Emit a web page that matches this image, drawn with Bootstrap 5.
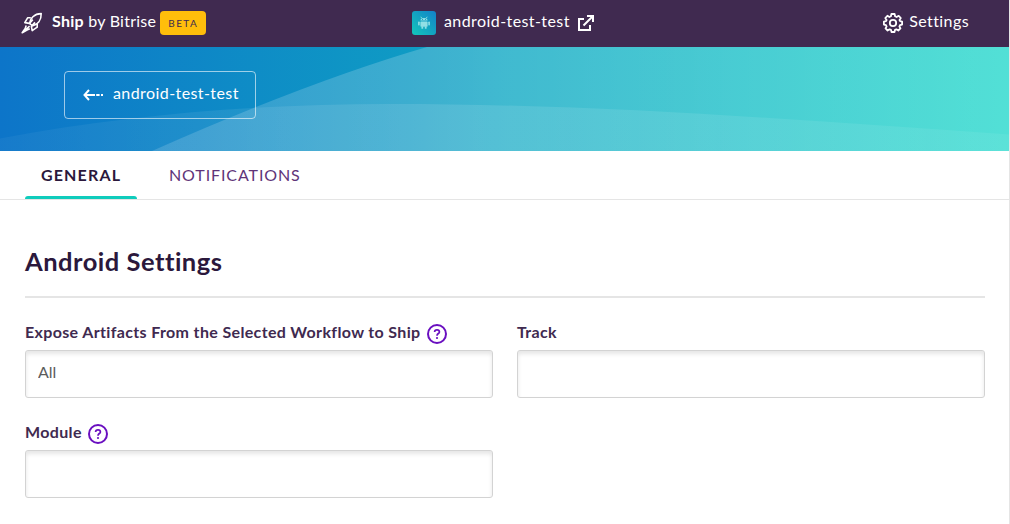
<!DOCTYPE html>
<html lang="en">
<head>
<meta charset="utf-8">
<meta name="viewport" content="width=device-width, initial-scale=1">
<title>Ship by Bitrise</title>
<link href="https://cdn.jsdelivr.net/npm/bootstrap@5.3.0/dist/css/bootstrap.min.css" rel="stylesheet">
<style>
  body { font-family: Lato, "Liberation Sans", sans-serif; font-size: 16px; line-height: 24px; color: #402a50; overflow: hidden; }
  .app-shell { min-height: 524px; border-right: 1px solid #e5e5e5; }
  .top-bar { height: 47px; background: #402a50; padding: 0 40px 5px 21px; display: grid; grid-template-columns: 391px 1fr auto; align-items: center; }
  .top-bar svg, .help-icon, .back-btn svg { flex: none; display: block; }
  .brand-icon { margin-top: 4px; }
  .brand-name { margin-left: 9px; letter-spacing: .25px; }
  .beta-tag { margin-left: 4px; margin-top: 4px; width: 46px; height: 24px; border-radius: 4px; background: #ffbe0b; color: #402a50; font-size: 10px; line-height: 22px; letter-spacing: 1.4px; padding-bottom: 1px; }
  .tile-icon { margin-top: 4px; }
  .open-icon { margin: 4px 0 0 8px; }
  .gear-icon { margin-top: 4px; }
  .app-name { letter-spacing: .42px; }
  .set-name { margin-left: 6px; letter-spacing: .42px; }
  .hero { height: 104px; background: linear-gradient(90deg, #0d75c9 0%, #0f9cc4 42%, #10a8c4 50%, #0fd4c6 100%); padding: 24px 64px; }
  .hero-waves { inset: 0; width: 100%; height: 100%; }
  .back-btn { width: 192px; height: 48px; border: 1px solid rgba(255,255,255,.6); border-radius: 4px; color: #fff; padding: 0 0 4px 17px; }
  .back-btn svg { margin-top: 3px; }
  .back-btn .app-name { margin-left: 9px; }
  .tab-row { height: 49px; padding-left: 25px; border-bottom: 1px solid #e5e5e5; }
  .tab-row .nav-link { height: 48px; padding: 12px 16px; color: #5f3479; letter-spacing: .9px; }
  .tab-row .nav-link.active { height: 45px; color: #2b183c; font-weight: 700; letter-spacing: 1.15px; }
  .tab-active { width: 112px; }
  .tab-bar { height: 3px; background: #0fccbc; border-radius: 3px 3px 0 0; }
  .settings { padding: 42px 24px 0 25px; }
  .settings h1 { font-size: 25.5px; line-height: 38px; font-weight: 700; color: #2b183c; margin: 0; letter-spacing: .5px; }
  .rule { height: 2px; background: #e5e5e5; margin-top: 16px; }
  .field-grid { display: grid; grid-template-columns: 468px 468px; column-gap: 24px; row-gap: 24px; margin-top: 24px; }
  .field-label { height: 24px; margin-bottom: 4px; font-weight: 700; letter-spacing: .35px; }
  .field-label > span { line-height: 20px; }
  .help-icon { margin: 2px 0 0 6px; }
  .field-input { height: 48px; border: 1px solid #d3d3d3; border-radius: 3px; padding: 7px 12px 13px; color: #5c5c5c; box-shadow: inset 0 3px 4px rgba(0,0,0,.1); line-height: 24px; }
</style>
</head>
<body>
<svg width="0" height="0" class="position-absolute">
  <symbol id="help" viewBox="0 0 20 20">
    <circle cx="10" cy="10" r="9" fill="none" stroke="#6a0fc0" stroke-width="2"/>
    <path d="M7.6 8C7.6 6.6 8.6 5.8 10 5.8S12.4 6.6 12.4 7.9C12.4 9.6 10 9.5 10 11.7" fill="none" stroke="#6a0fc0" stroke-width="1.7"/>
    <circle cx="10" cy="14" r="1.1" fill="#6a0fc0"/>
  </symbol>
</svg>
<div class="app-shell">
  <header class="top-bar text-white">
    <div class="d-flex align-items-center">
      <svg class="brand-icon" width="22" height="22" viewBox="0 0 22 22" fill="none" stroke="#fff" stroke-width="1.6" stroke-linejoin="round">
        <path d="M9 11.8C8.6 6.4 13.4 1.7 20.2 1.6C20.4 8.4 16.6 12.6 11.8 13.8Z"/>
        <path d="M9.8 5.8H6.6L3.8 10.6L8.4 11.4L11.8 7.6M16.2 11.8V15.2L11.2 18.6L10.4 14.4L14 10.4"/>
        <path d="M5.2 13.6L4.2 16.4L1.2 20.8L6 18L8.8 16.8M1.2 20.8L8.6 14.2"/>
      </svg>
      <span class="brand-name"><strong>Ship</strong> by Bitrise</span>
      <span class="beta-tag d-flex align-items-center justify-content-center">BETA</span>
    </div>
    <div class="d-flex align-items-center">
      <svg class="tile-icon" width="24" height="24" viewBox="0 0 24 24">
        <defs><linearGradient id="tile" x1="0" y1="1" x2="1" y2="0"><stop stop-color="#13c7bb"/><stop offset="1" stop-color="#1381c8"/></linearGradient></defs>
        <rect width="24" height="24" rx="3" fill="url(#tile)"/>
        <g fill="#91dfe5"><path d="M8.4 9.6C8.4 7.8 9.8 6.9 12 6.9S15.6 7.8 15.6 9.6Z"/><rect x="8.4" y="10.4" width="7.2" height="5.4" rx=".7"/><rect x="6.1" y="10.6" width="1.6" height="3.8" rx=".7"/><rect x="16.3" y="10.6" width="1.6" height="3.8" rx=".7"/><rect x="9.4" y="15.3" width="1.8" height="2.5" rx=".6"/><rect x="12.8" y="15.3" width="1.8" height="2.5" rx=".6"/></g>
        <path d="M8.8 5.8L10 7.5M15.2 5.8L14 7.5" stroke="#91dfe5" stroke-width=".9"/>
        <path d="M10 8.5h1M13 8.5h1" stroke="#159dbf" stroke-width=".9"/>
      </svg>
      <span class="app-name ms-2">android-test-test</span>
      <svg class="open-icon" width="16" height="16" viewBox="0 0 16 16" fill="none" stroke="#fff" stroke-width="2">
        <path d="M6 4H1V15H12V10M9 1H15V7M15 1L5.5 10.5"/>
      </svg>
    </div>
    <div class="d-flex align-items-center">
      <svg class="gear-icon" width="20" height="20" viewBox="0 0 20 20" fill="none" stroke="#fff" stroke-width="1.8" stroke-linejoin="round">
        <path d="M8.4 1H11.6L12.1 3.3L13.6 4L15.7 2.8L17.8 5L16.5 7L17.1 8.1L19.1 8.6V11.6L17 12.1L16.4 13.5L17.5 15.4L15.3 17.5L13.4 16.3L12 16.9L11.5 19H8.5L8 16.9L6.6 16.3L4.6 17.5L2.5 15.4L3.6 13.5L3 12.1L.9 11.6V8.6L3 8.1L3.6 7L2.3 5L4.4 2.8L6.4 4L7.9 3.3Z"/>
        <circle cx="10" cy="10" r="3.2"/>
      </svg>
      <span class="set-name">Settings</span>
    </div>
  </header>

  <section class="hero position-relative">
    <svg class="hero-waves position-absolute" viewBox="0 0 1009 104" preserveAspectRatio="none">
      <defs>
        <linearGradient id="w1" gradientUnits="userSpaceOnUse" x1="152" x2="1009" y1="0" y2="0"><stop stop-color="#fff" stop-opacity=".15"/><stop offset="1" stop-color="#fff" stop-opacity=".28"/></linearGradient>
        <linearGradient id="w2" gradientUnits="userSpaceOnUse" x1="0" x2="1009" y1="0" y2="0"><stop stop-color="#fff" stop-opacity=".04"/><stop offset=".45" stop-color="#fff" stop-opacity=".11"/><stop offset="1" stop-color="#fff" stop-opacity=".06"/></linearGradient>
      </defs>
      <path d="M152 104Q310 34 427 0H1009V104Z" fill="url(#w1)"/>
      <path d="M0 91.5C130 67 260 57 390 57C600 57 800 73 1009 87.5V104H0Z" fill="url(#w2)"/>
    </svg>
    <a href="#" class="back-btn position-relative d-flex align-items-center text-decoration-none">
      <svg width="22" height="14" viewBox="0 0 22 14" fill="none" stroke="#fff" stroke-width="2"><path d="M7 2L2.5 7L7 12M2.5 7H13M14.2 7H17.6M19 7H21"/></svg>
      <span class="app-name">android-test-test</span>
    </a>
  </section>

  <nav class="nav tab-row flex-nowrap">
    <div class="tab-active d-flex flex-column justify-content-end">
      <a class="nav-link active text-nowrap pb-0" href="#">GENERAL</a>
      <div class="tab-bar"></div>
    </div>
    <a class="nav-link ms-3" href="#">NOTIFICATIONS</a>
  </nav>

  <main class="settings">
    <h1>Android Settings</h1>
    <div class="rule"></div>
    <form class="field-grid">
      <div>
        <label class="field-label d-flex" for="workflow"><span>Expose Artifacts From the Selected Workflow to Ship</span><svg class="help-icon" width="20" height="20"><use href="#help"/></svg></label>
        <input id="workflow" class="field-input form-control" value="All">
      </div>
      <div>
        <label class="field-label d-flex" for="track"><span>Track</span></label>
        <input id="track" class="field-input form-control">
      </div>
      <div>
        <label class="field-label d-flex" for="module"><span>Module</span><svg class="help-icon" width="20" height="20"><use href="#help"/></svg></label>
        <input id="module" class="field-input form-control">
      </div>
    </form>
  </main>
</div>
<script src="https://cdn.jsdelivr.net/npm/bootstrap@5.3.0/dist/js/bootstrap.bundle.min.js"></script>
</body>
</html>
